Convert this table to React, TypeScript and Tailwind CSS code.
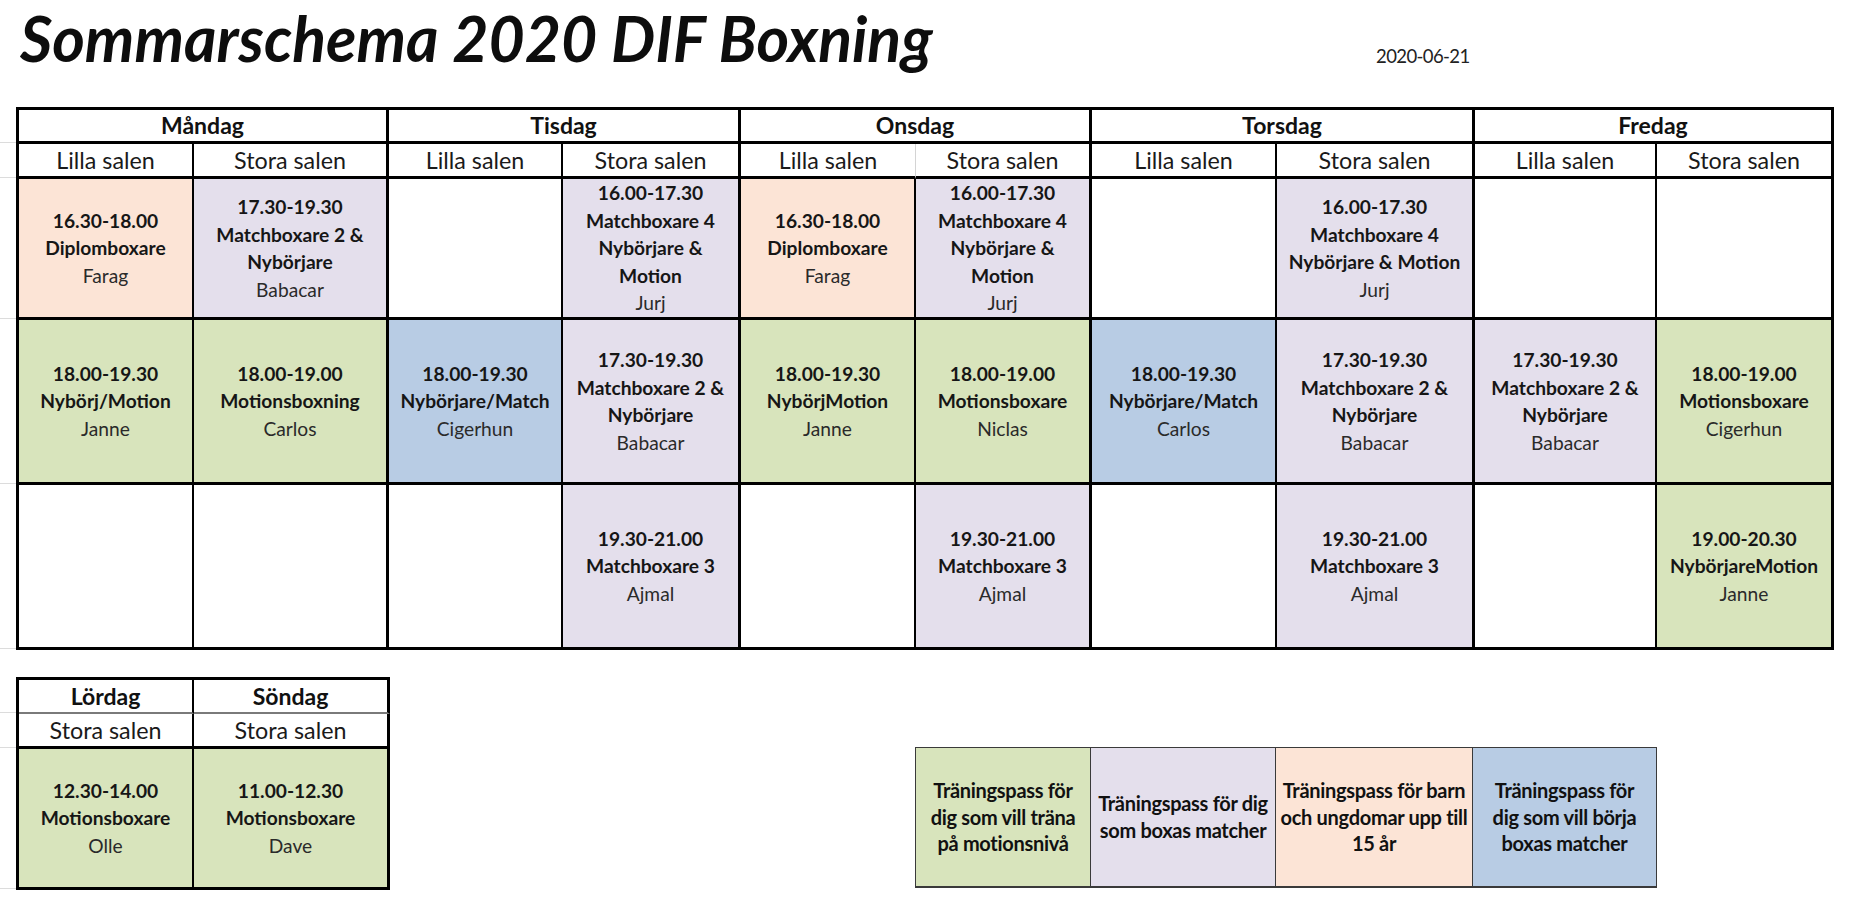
import React from "react";

type Tone = "peach" | "lilac" | "green" | "blue";

const toneBg: Record<Tone, string> = {
  peach: "bg-[#fce4d6]",
  lilac: "bg-[#e4dfec]",
  green: "bg-[#d8e4bc]",
  blue: "bg-[#b8cce4]",
};

type Pass = { tone: Tone; lines: string[]; coach: string } | null;

const days = ["Måndag", "Tisdag", "Onsdag", "Torsdag", "Fredag"];

const diplom: Pass = { tone: "peach", lines: ["16.30-18.00", "Diplomboxare"], coach: "Farag" };
const match2: Pass = { tone: "lilac", lines: ["17.30-19.30", "Matchboxare 2 &", "Nybörjare"], coach: "Babacar" };
const match4: Pass = { tone: "lilac", lines: ["16.00-17.30", "Matchboxare 4", "Nybörjare &", "Motion"], coach: "Jurj" };
const match3: Pass = { tone: "lilac", lines: ["19.30-21.00", "Matchboxare 3"], coach: "Ajmal" };

const schedule: Pass[][] = [
  [
    diplom,
    match2,
    null,
    match4,
    diplom,
    match4,
    null,
    { tone: "lilac", lines: ["16.00-17.30", "Matchboxare 4", "Nybörjare & Motion"], coach: "Jurj" },
    null,
    null,
  ],
  [
    { tone: "green", lines: ["18.00-19.30", "Nybörj/Motion"], coach: "Janne" },
    { tone: "green", lines: ["18.00-19.00", "Motionsboxning"], coach: "Carlos" },
    { tone: "blue", lines: ["18.00-19.30", "Nybörjare/Match"], coach: "Cigerhun" },
    match2,
    { tone: "green", lines: ["18.00-19.30", "NybörjMotion"], coach: "Janne" },
    { tone: "green", lines: ["18.00-19.00", "Motionsboxare"], coach: "Niclas" },
    { tone: "blue", lines: ["18.00-19.30", "Nybörjare/Match"], coach: "Carlos" },
    match2,
    match2,
    { tone: "green", lines: ["18.00-19.00", "Motionsboxare"], coach: "Cigerhun" },
  ],
  [
    null,
    null,
    null,
    match3,
    null,
    match3,
    null,
    match3,
    null,
    { tone: "green", lines: ["19.00-20.30", "NybörjareMotion"], coach: "Janne" },
  ],
];

const legend: { tone: Tone; lines: string[]; w: string }[] = [
  { tone: "green", lines: ["Träningspass för", "dig som vill träna", "på motionsnivå"], w: "w-[175px]" },
  { tone: "lilac", lines: ["Träningspass för dig", "som boxas matcher"], w: "w-[185px]" },
  { tone: "peach", lines: ["Träningspass för barn", "och ungdomar upp till", "15 år"], w: "w-[197px]" },
  { tone: "blue", lines: ["Träningspass för", "dig som vill börja", "boxas matcher"], w: "w-[184px]" },
];

function PassCell({ pass, right }: { pass: Pass; right: string }) {
  return (
    <div
      className={`flex flex-col items-center justify-center text-center border-b-[3px] border-black ${right} ${
        pass ? toneBg[pass.tone] : "bg-white"
      }`}
    >
      {pass && (
        <>
          {pass.lines.map((l, i) => (
            <div key={i} className="whitespace-nowrap font-bold text-[19.2px] leading-[27.5px] text-[#161616]">
              {l}
            </div>
          ))}
          <div className="whitespace-nowrap text-[19.2px] leading-[27.5px] text-[#2a2a2a]">{pass.coach}</div>
        </>
      )}
    </div>
  );
}

// faint spreadsheet gridlines peeking out in the left margin
function Gutter({ rows }: { rows: string[] }) {
  return (
    <div className="w-[16px] flex flex-col">
      {rows.map((h, i) => (
        <div key={i} className={`${h} border-b border-[#dcdcdc]`} />
      ))}
    </div>
  );
}

export default function App() {
  return (
    <div className="w-[1850px] h-[907px] overflow-hidden bg-white font-['Lato',sans-serif] text-[#161616]">
      <div className="flex h-[107px]">
        <div className="w-[1376px] pl-[20px] pt-[7px] text-[62.5px] leading-none font-bold italic text-[#0d0d0d] whitespace-nowrap">
          Sommarschema 2020 DIF Boxning
        </div>
        <div className="pt-[47px] text-[18.5px] leading-none tracking-[-0.6px] text-[#222]">2020-06-21</div>
      </div>

      <div className="flex">
        <Gutter rows={["h-[36px]", "h-[35px]", "h-[141px]", "h-[165px]", "h-[165px]"]} />
        <div className="w-[1818px] grid grid-cols-[175px_195px_174px_178px_175px_176px_185px_198px_182px_177px] grid-rows-[34px_35px_141px_165px_165px] border-t-[3px] border-l-[3px] border-black">
          {days.map((d) => (
            <div
              key={d}
              className="col-span-2 flex items-center justify-center border-r-[3px] border-b-[3px] border-black font-bold text-[23px] text-[#111]"
            >
              {d}
            </div>
          ))}
          {days.map((d, i) => (
            <React.Fragment key={d}>
              <div
                className={`flex items-center justify-center border-b-[3px] border-black text-[23.3px] text-[#1a1a1a] ${
                  i === 2 ? "border-r border-r-[#d4d4d4]" : "border-r-2"
                }`}
              >
                Lilla salen
              </div>
              <div className="flex items-center justify-center border-r-[3px] border-b-[3px] border-black text-[23.3px] text-[#1a1a1a]">
                Stora salen
              </div>
            </React.Fragment>
          ))}
          {schedule.map((row, r) =>
            row.map((p, i) => <PassCell key={`${r}-${i}`} pass={p} right={i % 2 ? "border-r-[3px]" : "border-r-2"} />)
          )}
        </div>
      </div>

      <div className="flex items-start mt-[27px]">
        <Gutter rows={["h-[36px]", "h-[35px]", "h-[141px]"]} />
        <div className="grid grid-cols-[175px_196px] grid-rows-[34px_35px_141px] border-t-[3px] border-l-[3px] border-black">
          <div className="flex items-center justify-center border-r-2 border-b-2 border-black border-b-[#7a7a7a] font-bold text-[23px] text-[#111]">
            Lördag
          </div>
          <div className="flex items-center justify-center border-r-[3px] border-b-2 border-black border-b-[#7a7a7a] font-bold text-[23px] text-[#111]">
            Söndag
          </div>
          <div className="flex items-center justify-center border-r-2 border-b-[3px] border-black text-[23.3px] text-[#1a1a1a]">
            Stora salen
          </div>
          <div className="flex items-center justify-center border-r-[3px] border-b-[3px] border-black text-[23.3px] text-[#1a1a1a]">
            Stora salen
          </div>
          <PassCell pass={{ tone: "green", lines: ["12.30-14.00", "Motionsboxare"], coach: "Olle" }} right="border-r-2" />
          <PassCell pass={{ tone: "green", lines: ["11.00-12.30", "Motionsboxare"], coach: "Dave" }} right="border-r-[3px]" />
        </div>

        <div className="ml-[525px] mt-[70px] flex h-[141px] border-t border-l border-b-2 border-[#3a3a3a]">
          {legend.map((l, i) => (
            <div
              key={i}
              className={`flex flex-col items-center justify-center text-center border-r border-[#3a3a3a] ${toneBg[l.tone]} ${l.w}`}
            >
              {l.lines.map((t, j) => (
                <div key={j} className="whitespace-nowrap font-bold text-[20px] leading-[26.7px] tracking-[-0.3px] text-[#111]">
                  {t}
                </div>
              ))}
            </div>
          ))}
        </div>
      </div>
    </div>
  );
}
